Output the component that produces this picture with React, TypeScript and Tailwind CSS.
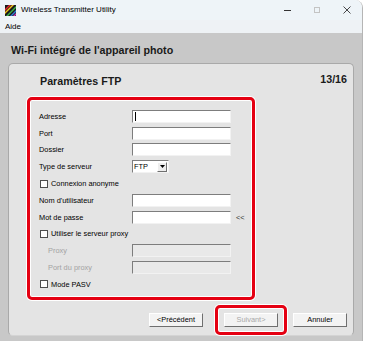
import type { ReactNode } from "react";

const field =
  "h-[13px] border border-t-[#7d7d7d] border-l-[#7d7d7d] border-b-[#f2f2f2] border-r-[#f2f2f2]";

function Input({ disabled, cursor }: { disabled?: boolean; cursor?: boolean }) {
  return (
    <div
      className={`${field} w-[99px] flex items-center pl-[2px] ${
        disabled ? "bg-[#e9e9e9]" : "bg-white"
      }`}
    >
      {cursor && <div className="w-px h-[9px] bg-black" />}
    </div>
  );
}

function Row({
  label,
  indent,
  disabled,
  children,
}: {
  label: string;
  indent?: boolean;
  disabled?: boolean;
  children: ReactNode;
}) {
  return (
    <div className="flex items-center h-[16.8px]">
      <span
        className={`${indent ? "pl-[18px] w-[102px]" : "pl-[9px] w-[102px]"} ${
          disabled ? "text-[#a3a3a3]" : "text-black"
        }`}
      >
        {label}
      </span>
      {children}
    </div>
  );
}

function Check({ label }: { label: string }) {
  return (
    <div className="flex items-center h-[16.8px] pl-[10px]">
      <span className="w-[8px] h-[8px] border border-[#4d4d4d] bg-white" />
      <span className="ml-[3px]">{label}</span>
    </div>
  );
}

function Btn({ text, disabled }: { text: string; disabled?: boolean }) {
  return (
    <div
      className={`w-[54px] h-[14px] flex items-center justify-center bg-[#f3f3f3] border border-t-white border-l-white border-b-[#6f6f6f] border-r-[#6f6f6f] ${
        disabled ? "text-[#a8a8a8]" : "text-black"
      }`}
    >
      {text}
    </div>
  );
}

function AppIcon() {
  return (
    <svg width="11" height="11" viewBox="0 0 11 11">
      <rect width="11" height="11" fill="#1b1b1b" />
      <path d="M0 4 L4 0 H6 L0 6Z" fill="#e8262b" />
      <path d="M0 7 L7 0 H9 L0 9Z" fill="#f5c11a" />
      <path d="M1 11 L11 1 V3 L3 11Z" fill="#3cb54a" />
      <path d="M5 11 L11 5 V7 L7 11Z" fill="#2a7fd6" />
      <path d="M8 11 L11 8 V10 L10 11Z" fill="#c33ab8" />
    </svg>
  );
}

export default function App() {
  return (
    <div className="w-[365px] h-[341px] bg-white overflow-hidden font-['Liberation_Sans',sans-serif]">
      <div className="w-[363px] h-[341px] flex flex-col rounded-tr-[8px] border-r border-[#b5b5b5] overflow-hidden">
        {/* title bar */}
        <div className="h-[20px] bg-[#eef4f8] flex items-center pl-[5px] text-[8px] text-black">
          <AppIcon />
          <span className="ml-[5px]">Wireless Transmitter Utility</span>
          <div className="ml-auto flex items-center">
            <div className="w-[30px] flex justify-center">
              <div className="w-[7px] h-px bg-[#333]" />
            </div>
            <div className="w-[30px] flex justify-center">
              <div className="w-[6px] h-[6px] border border-[#c4c4c4]" />
            </div>
            <div className="w-[30px] flex justify-center">
              <svg width="8" height="8" viewBox="0 0 8 8">
                <path d="M0.5 0.5 L7.5 7.5 M7.5 0.5 L0.5 7.5" stroke="#333" strokeWidth="0.9" />
              </svg>
            </div>
          </div>
        </div>
        {/* menu bar */}
        <div className="h-[13px] bg-[#eef2f5] flex items-center pl-[5px] text-[8px] text-black">
          Aide
        </div>
        {/* body */}
        <div className="flex-1 bg-[#c8c8c8] flex flex-col px-[8px]">
          <div className="h-[30px] flex items-center pl-[3px] pt-[5px] text-[10.7px] font-bold text-[#1a1a1a]">
            Wi-Fi intégré de l'appareil photo
          </div>
          <div className="flex-1 mb-[5px] rounded-[5px] bg-[#e4e4e4] border border-[#a9a9a9] border-b-[#d4d4d4] flex flex-col">
            <div className="flex items-center justify-between pt-[10px] pl-[31px] pr-[6px] h-[24px] text-[10.7px] font-bold text-[#1a1a1a]">
              <span>Paramètres FTP</span>
              <span className="-mt-[3px]">13/16</span>
            </div>
            <div className="ml-[18px] mt-[9px] w-[228px] h-[203px] rounded-[5px] border-[3px] border-[#e50012] shadow-[0_0_0_1px_#fff,inset_0_0_0_1px_#fff] pt-[8px] text-[7.4px] text-black">
              <Row label="Adresse">
                <Input cursor />
              </Row>
              <Row label="Port">
                <Input />
              </Row>
              <Row label="Dossier">
                <Input />
              </Row>
              <Row label="Type de serveur">
                <div className={`${field} w-[37px] bg-white flex items-center justify-between pl-[1px] pr-px`}>
                  <span>FTP</span>
                  <span className="w-[10px] h-[10px] bg-[#eeeeee] border border-t-white border-l-white border-b-[#6f6f6f] border-r-[#6f6f6f] flex items-center justify-center">
                    <svg width="5" height="3" viewBox="0 0 5 3">
                      <path d="M0 0 H5 L2.5 3Z" fill="#000" />
                    </svg>
                  </span>
                </div>
              </Row>
              <Check label="Connexion anonyme" />
              <Row label="Nom d'utilisateur">
                <Input />
              </Row>
              <Row label="Mot de passe">
                <Input />
                <span className="ml-[5px] text-[#333]">&lt;&lt;</span>
              </Row>
              <Check label="Utiliser le serveur proxy" />
              <Row label="Proxy" indent disabled>
                <Input disabled />
              </Row>
              <Row label="Port du proxy" indent disabled>
                <Input disabled />
              </Row>
              <Check label="Mode PASV" />
            </div>
            <div className="flex items-center justify-end mt-[5px] pr-[6px] text-[7.4px]">
              <Btn text="<Précédent" />
              <div className="ml-[12px] rounded-[5px] border-[3px] border-[#e50012] shadow-[0_0_0_1px_#fff,inset_0_0_0_1px_#fff] px-[6px] py-[5px]">
                <Btn text="Suivant>" disabled />
              </div>
              <div className="ml-[6px]">
                <Btn text="Annuler" />
              </div>
            </div>
          </div>
        </div>
      </div>
    </div>
  );
}
